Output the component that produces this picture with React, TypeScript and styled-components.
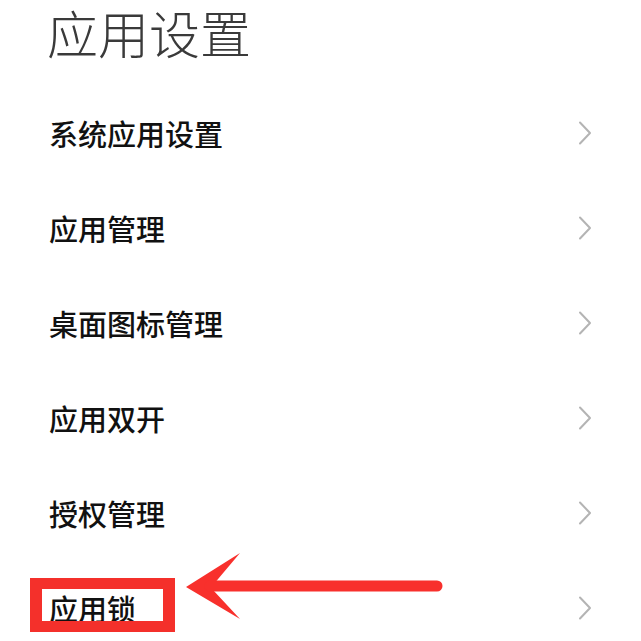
import styled, { createGlobalStyle } from "styled-components";

const GlobalStyle = createGlobalStyle`
  html, body {
    margin: 0;
    padding: 0;
    background: #ffffff;
  }
  body {
    font-family: "Noto Sans CJK SC", "Noto Sans", sans-serif;
  }
`;

const Page = styled.div`
  position: relative;
  width: 641px;
  height: 641px;
  overflow: hidden;
  background: #ffffff;
  padding: 0 49px 0 47px;
  box-sizing: border-box;
`;

const Title = styled.h1`
  margin: 0;
  line-height: 64px;
  font-size: 51px;
  font-weight: 300;
  color: #3a3a3a;
`;

const List = styled.ul`
  list-style: none;
  margin: 21px 0 0;
  padding: 0;
`;

const Row = styled.li`
  display: flex;
  align-items: center;
  justify-content: space-between;
  height: 95px;
`;

const Label = styled.span`
  font-size: 29px;
  font-weight: 500;
  color: #111111;
  padding-left: 2px;
`;

const Highlight = styled.div`
  position: absolute;
  left: 30px;
  top: 578px;
  width: 145px;
  height: 54px;
  box-sizing: border-box;
  border-style: solid;
  border-color: #f4302b;
  border-width: 11px 12px;
`;

const Pointer = styled.svg`
  position: absolute;
  left: 184px;
  top: 552px;
`;

function Chevron() {
  return (
    <svg width="14" height="24" viewBox="0 0 14 24">
      <path
        d="M2 1.5 L12 12 L2 22.5"
        fill="none"
        stroke="#b4b4b4"
        strokeWidth="2"
        strokeLinecap="round"
        strokeLinejoin="round"
      />
    </svg>
  );
}

const items = [
  "系统应用设置",
  "应用管理",
  "桌面图标管理",
  "应用双开",
  "授权管理",
  "应用锁",
];

export default function App() {
  return (
    <Page>
      <GlobalStyle />
      <Title>应用设置</Title>
      <List>
        {items.map((item) => (
          <Row key={item}>
            <Label>{item}</Label>
            <Chevron />
          </Row>
        ))}
      </List>
      <Highlight />
      <Pointer width="266" height="70" viewBox="0 0 266 70">
        <path d="M2 35 L56 1 L29 33 L29 38 L56 67 Z" fill="#f8302c" />
        <line
          x1="26"
          y1="34"
          x2="253"
          y2="34"
          stroke="#f8302c"
          strokeWidth="11"
          strokeLinecap="round"
        />
      </Pointer>
    </Page>
  );
}
